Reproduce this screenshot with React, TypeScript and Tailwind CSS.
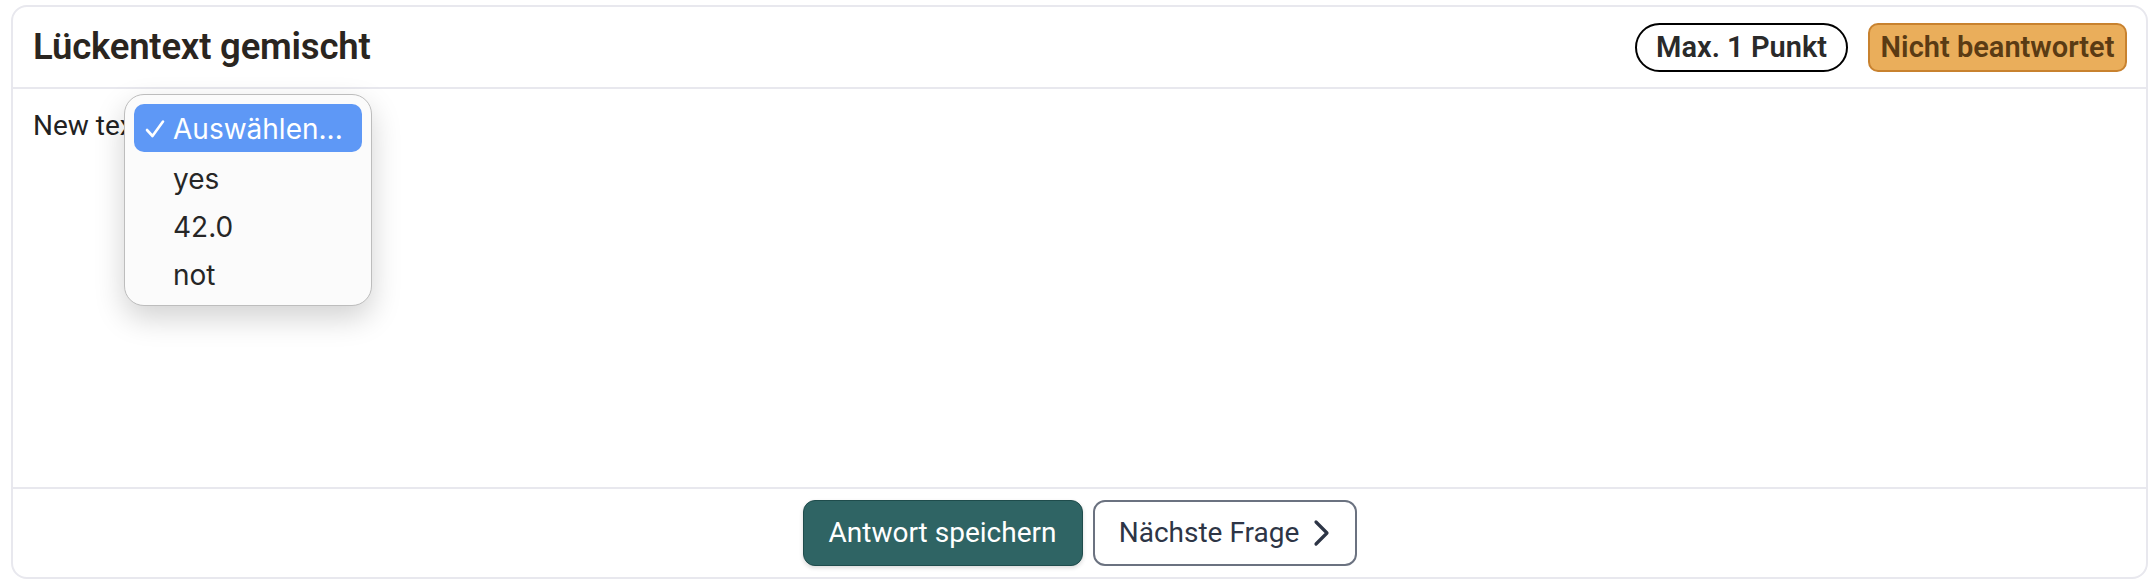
import React from "react";

export default function App() {
  return (
    <div className="w-[2156px] h-[586px] bg-white" style={{ fontFamily: "Roboto, 'Liberation Sans', sans-serif" }}>
      <div className="pt-[5px] pl-[11px]">
        <div className="w-[2137px] h-[574px] border-2 border-[#e8e8ee] rounded-[16px] flex flex-col bg-white">
          {/* Header */}
          <div className="h-[82px] shrink-0 border-b-2 border-[#e8e8ee] flex items-center justify-between pl-[20px] pr-[19px]">
            <h1 className="text-[36.5px] font-semibold text-[#2a2520] tracking-[-0.2px] leading-none">Lückentext gemischt</h1>
            <div className="flex items-center gap-[20px]">
              <span className="w-[213px] h-[49px] flex items-center justify-center rounded-full border-2 border-black text-[29px] font-semibold text-[#2a2a2a] leading-none">
                Max. 1 Punkt
              </span>
              <span className="w-[259px] h-[49px] flex items-center justify-center rounded-[10px] border-2 border-[#c8822f] bg-[#eaae5b] text-[29px] font-semibold text-[#5a3b14] leading-none">
                Nicht beantwortet
              </span>
            </div>
          </div>
          {/* Body */}
          <div className="relative flex-1 pl-[20px] pt-[16px]">
            <p className="text-[28px] leading-[42px] text-[#222]">New text gap</p>
            <div
              className="absolute left-[111px] top-[5px] w-[248px] h-[212px] rounded-[20px] border border-[#bdbdbd] bg-[#fbfbfb] p-[9px] shadow-[0_12px_30px_rgba(0,0,0,0.18)]"
              style={{ fontFamily: "Inter, 'Noto Sans', sans-serif" }}
            >
              <div className="h-[48px] rounded-[10px] bg-[#5e98f6] flex items-center text-white text-[28px] leading-none pt-[2px]">
                <svg className="ml-[11px] w-[20px] h-[20px]" viewBox="0 0 20 20" fill="none">
                  <path d="M2 11 L7.5 17 L18 2.5" stroke="white" strokeWidth="2.6" strokeLinecap="round" strokeLinejoin="round" />
                </svg>
                <span className="ml-[8px]">Auswählen...</span>
              </div>
              {["yes", "42.0", "not"].map((t) => (
                <div key={t} className="h-[48px] flex items-center pl-[39px] pt-[5px] text-[28px] leading-none text-[#262626]">
                  {t}
                </div>
              ))}
            </div>
          </div>
          {/* Footer */}
          <div className="h-[90px] shrink-0 border-t-2 border-[#e8e8ee] flex items-center justify-center gap-[10px]">
            <button className="w-[280px] h-[66px] rounded-[12px] bg-[#2f6464] border border-[#1f4c4c] text-white text-[28px] shadow-[0_2px_4px_rgba(0,0,0,0.15)]">
              Antwort speichern
            </button>
            <button className="w-[264px] h-[66px] rounded-[12px] bg-white border-2 border-[#6b7280] text-[#2d3546] text-[28px] flex items-center justify-center gap-[14px]">
              <span>Nächste Frage</span>
              <svg width="17" height="28" viewBox="0 0 17 28" fill="none">
                <path d="M3 3 L14 14 L3 25" stroke="#2d3546" strokeWidth="3.2" strokeLinecap="round" strokeLinejoin="round" />
              </svg>
            </button>
          </div>
        </div>
      </div>
    </div>
  );
}
